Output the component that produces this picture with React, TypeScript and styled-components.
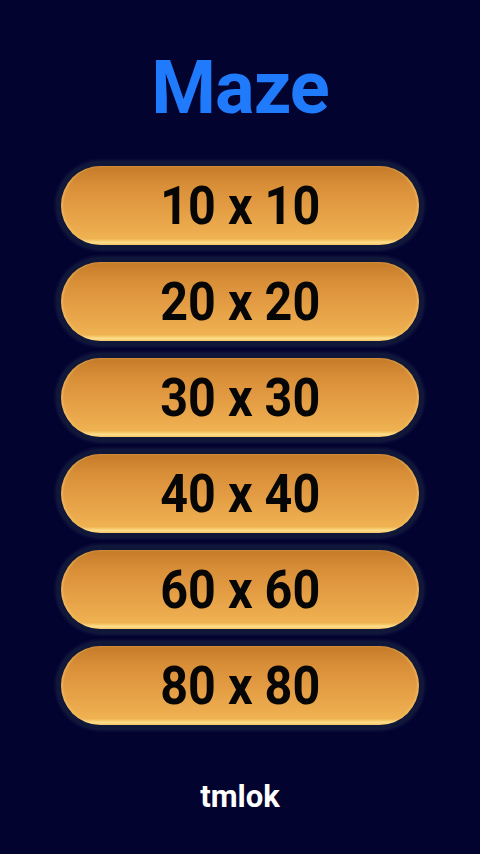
import styled, { createGlobalStyle } from "styled-components";

const GlobalStyle = createGlobalStyle`
  html, body {
    margin: 0;
    padding: 0;
    background: #03032f;
  }
  * {
    box-sizing: border-box;
  }
`;

const Screen = styled.div`
  width: 480px;
  height: 854px;
  background: #03032f;
  display: flex;
  flex-direction: column;
  align-items: center;
  font-family: Roboto, "Liberation Sans", sans-serif;
`;

const Title = styled.h1`
  margin: 0;
  padding-top: 44px;
  height: 161px;
  font-size: 74px;
  font-weight: 700;
  line-height: 88px;
  color: #1f7bfb;
  letter-spacing: -1px;
`;

const SizeList = styled.ul`
  list-style: none;
  margin: 0;
  padding: 0;
  display: flex;
  flex-direction: column;
  gap: 7px;
`;

const Frame = styled.li`
  width: 368px;
  height: 89px;
  padding: 5px;
  border-radius: 45px;
  background: #101739;
  box-shadow: 0 0 3px 1px rgba(20, 28, 70, 0.8);
`;

const SizeButton = styled.button`
  width: 100%;
  height: 100%;
  border: none;
  border-radius: 40px;
  background: linear-gradient(
    to bottom,
    #c47a28 0%,
    #d98f38 25%,
    #e6a046 60%,
    #efb252 92%,
    #fde08c 97%,
    #f3c060 100%
  );
  box-shadow: inset 2px 0 2px rgba(255, 220, 130, 0.35),
    inset -2px 0 2px rgba(255, 220, 130, 0.35);
  font-family: Roboto, "Liberation Sans", sans-serif;
  font-size: 48px;
  font-weight: 700;
  color: #060606;
  cursor: pointer;
  padding: 0;
`;

// the digits on the buttons are drawn a little taller than Roboto's own shape
const Label = styled.span`
  display: inline-block;
  transform: scale(1.01, 1.1);
  padding-left: 1px;
`;

const Footer = styled.div`
  margin-top: 48px;
  font-size: 31px;
  font-weight: 700;
  color: #ffffff;
`;

const sizes = [10, 20, 30, 40, 60, 80];

const App = () => {
  return (
    <Screen>
      <GlobalStyle />
      <Title>Maze</Title>
      <SizeList>
        {sizes.map((n) => (
          <Frame key={n}>
            <SizeButton>
              <Label>
                {n} x {n}
              </Label>
            </SizeButton>
          </Frame>
        ))}
      </SizeList>
      <Footer>tmlok</Footer>
    </Screen>
  );
};

export default App;
